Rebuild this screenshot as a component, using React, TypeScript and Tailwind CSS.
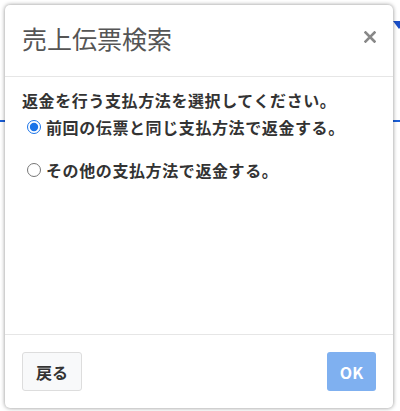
import { useState } from "react";

export default function App() {
  const [method, setMethod] = useState("same");

  return (
    <div
      className="relative w-[400px] h-[411px] overflow-hidden bg-white"
      style={{ fontFamily: '"Noto Sans CJK JP", "Noto Sans", sans-serif' }}
    >
      {/* page behind the dialog */}
      <div className="absolute left-0 right-0 top-[120px] h-[2px] bg-[#1a5fd8]" />
      <div className="absolute right-0 top-[21px] w-0 h-0 border-l-[6px] border-r-[6px] border-t-[8px] border-l-transparent border-r-transparent border-t-[#1a4fc8] translate-x-[5px]" />

      <div className="relative ml-[5px] mt-[5px] flex h-[403px] w-[388px] flex-col rounded-[5px] bg-white shadow-[0_0_4px_rgba(0,0,0,0.45)]">
        <div className="flex h-[72px] items-start justify-between border-b border-[#e6e6e6] pl-[17px] pr-[17px] pt-[17px]">
          <h2 className="text-[25px] font-normal leading-[32px] text-[#555]">売上伝票検索</h2>
          <button className="mt-[9px] text-[#888]">
            <svg width="12" height="12" viewBox="0 0 12 12">
              <path d="M1.5 1.5 L10.5 10.5 M10.5 1.5 L1.5 10.5" stroke="currentColor" strokeWidth="2.6" strokeLinecap="square" />
            </svg>
          </button>
        </div>

        <div className="flex-1 px-[17px] pt-[11px] text-[#333]">
          <p className="text-[16px] font-bold leading-[24px] tracking-[0.6px]">返金を行う支払方法を選択してください。</p>
          <label className="mt-[3px] flex items-center gap-[5px] pl-[5px] text-[16px] font-bold leading-[24px] tracking-[0.6px]">
            <input
              type="radio"
              name="method"
              className="m-0 h-[14px] w-[14px] accent-[#1a73e8]"
              checked={method === "same"}
              onChange={() => setMethod("same")}
            />
            前回の伝票と同じ支払方法で返金する。
          </label>
          <label className="mt-[19px] flex items-center gap-[5px] pl-[5px] text-[16px] font-bold leading-[24px] tracking-[0.6px]">
            <input
              type="radio"
              name="method"
              className="m-0 h-[14px] w-[14px] accent-[#1a73e8]"
              checked={method === "other"}
              onChange={() => setMethod("other")}
            />
            その他の支払方法で返金する。
          </label>
        </div>

        <div className="flex items-center justify-between border-t border-[#e6e6e6] px-[17px] pt-[17px] pb-[17px]">
          <button className="h-[39px] w-[60px] rounded-[3px] border border-[#ddd] bg-[#f8f9fa] text-[16px] font-bold text-[#333]">
            戻る
          </button>
          <button
            disabled
            className="h-[39px] w-[49px] rounded-[3px] bg-[#7fb0f0] text-[16px] font-bold text-white"
          >
            OK
          </button>
        </div>
      </div>
    </div>
  );
}
